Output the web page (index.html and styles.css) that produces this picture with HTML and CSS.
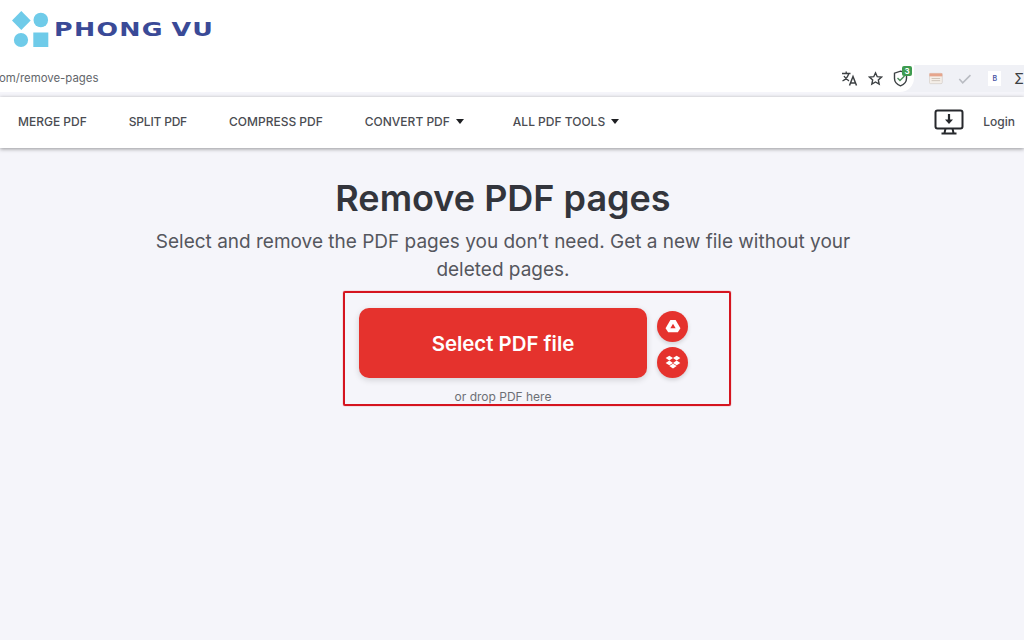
FILE: index.html
```html
<!DOCTYPE html>
<html lang="en">
<head>
<meta charset="utf-8">
<title>Remove PDF pages</title>
<link rel="stylesheet" href="styles.css">
</head>
<body>
<header class="brand">
  <svg class="brand-mark" width="38" height="38" viewBox="0 0 38 38" aria-hidden="true">
    <path d="M9.300 0L18.700 9.500L9.300 19L0 9.500Z" fill="#6fcbe9"/>
    <circle cx="28.800" cy="9" r="7.300" fill="#6fcbe9"/>
    <circle cx="9" cy="29" r="7.100" fill="#6fcbe9"/>
    <rect x="21.300" y="21.500" width="15" height="14.500" fill="#6fcbe9"/>
  </svg>
  <span class="brand-name">PHONG VU</span>
</header>
<div class="browser-bar">
  <div class="omnibox">
    <span class="url">om/remove-pages</span>
    <div class="omni-icons">
      <svg width="17" height="17" viewBox="0 0 17 17" fill="none" stroke="#3c4043" stroke-width="1.300" aria-hidden="true">
        <path d="M1 3.500H9.500M5.200 1.500V3.500M7.800 3.500C7 6.500 4.500 9.500 1.500 11M3 6C4 8 6 9.800 8 10.800"/>
        <path d="M8.500 15.500L12 6.500L15.500 15.500M9.700 13H14.300" stroke-width="1.500"/>
      </svg>
      <svg width="15" height="15" viewBox="0 0 24 24" fill="none" stroke="#3c4043" stroke-width="2.200" aria-hidden="true">
        <path d="M12 3L14.800 9.100L21.500 9.800L16.500 14.300L17.900 20.900L12 17.500L6.100 20.900L7.500 14.300L2.500 9.800L9.200 9.100Z"/>
      </svg>
      <span class="shield">
        <svg width="15" height="17" viewBox="0 0 15 17" fill="none" stroke="#3c4043" stroke-width="1.400" aria-hidden="true">
          <path d="M7.500 1.200L13.500 3.200V8.500C13.500 12 10.800 14.500 7.500 15.800C4.200 14.500 1.500 12 1.500 8.500V3.200Z"/>
          <path d="M4.500 8L7 10.500L11.500 6" stroke="#4b8b5a"/>
        </svg>
        <span class="badge">3</span>
      </span>
    </div>
  </div>
  <div class="extensions">
    <svg width="16" height="13" viewBox="0 0 16 13" aria-hidden="true">
      <rect x="0.500" y="0.500" width="15" height="12" rx="1.500" fill="#f5efe9" stroke="#d9d4cf"/>
      <rect x="0.500" y="0.500" width="15" height="3.500" fill="#e6a58d"/>
      <path d="M3 6.500H13M3 9H13" stroke="#c9bdb3"/>
    </svg>
    <svg width="16" height="12" viewBox="0 0 16 12" fill="none" stroke="#b9bcc2" stroke-width="1.800" aria-hidden="true">
      <path d="M1.500 6L5.500 10.500L14.500 1.500"/>
    </svg>
    <span class="ext-b">B</span>
    <span class="ext-sigma">Σ</span>
  </div>
</div>
<nav class="nav">
  <ul class="nav-links">
    <li class="nav-item merge">MERGE PDF</li>
    <li class="nav-item split">SPLIT PDF</li>
    <li class="nav-item compress">COMPRESS PDF</li>
    <li class="nav-item convert">CONVERT PDF<span class="caret"></span></li>
    <li class="nav-item all">ALL PDF TOOLS<span class="caret"></span></li>
  </ul>
  <div class="nav-right">
    <svg width="30" height="26" viewBox="0 0 30 26" fill="none" stroke="#26282c" stroke-width="2" aria-hidden="true">
      <rect x="1.500" y="1.500" width="27" height="18" rx="2"/>
      <path d="M15 5V13" stroke-width="2.200"/>
      <path d="M11 10.500H19L15 15Z" fill="#26282c" stroke="none"/>
      <path d="M11.500 19.500L10.500 24M18.500 19.500L19.500 24M7.500 24.500H22.500"/>
    </svg>
    <span class="login">Login</span>
  </div>
</nav>
<main class="page">
  <h1 class="title">Remove PDF pages</h1>
  <p class="lead">Select and remove the PDF pages you don’t need. Get a new file without your deleted pages.</p>
  <section class="highlight">
    <div class="upload-row">
      <button class="select-btn" type="button">Select PDF file</button>
      <div class="cloud">
        <span class="cloud-btn">
          <svg width="16" height="14" viewBox="0 0 18 16" aria-hidden="true">
            <path d="M6 1H12L17.500 10.500L14.500 15H3.500L0.500 10.500Z" fill="#fff"/>
            <path d="M9 5.500L6 10.500H12Z" fill="#e5322d"/>
          </svg>
        </span>
        <span class="cloud-btn">
          <svg width="16" height="14" viewBox="0 0 18 16" fill="#fff" aria-hidden="true">
            <path d="M4.800 0.800L9 3.500L4.800 6.200L0.600 3.500Z"/>
            <path d="M13.200 0.800L17.400 3.500L13.200 6.200L9 3.500Z"/>
            <path d="M4.800 6.400L9 9.100L4.800 11.800L0.600 9.100Z"/>
            <path d="M13.200 6.400L17.400 9.100L13.200 11.800L9 9.100Z"/>
            <path d="M4.800 12.600L9 9.900L13.200 12.600L9 15.300Z"/>
          </svg>
        </span>
      </div>
    </div>
    <p class="drop">or drop PDF here</p>
  </section>
</main>
</body>
</html>
```
FILE: styles.css
```css
* { box-sizing: border-box; }
html, body { margin: 0; padding: 0; }
body {
  width: 1024px;
  height: 640px;
  overflow: hidden;
  background: #f5f5fa;
  font-family: Inter, "Liberation Sans", sans-serif;
  display: flex;
  flex-direction: column;
}
.brand {
  height: 65px;
  background: #fff;
  display: flex;
  align-items: center;
  padding: 0 0 5px 12px;
  flex: none;
}
.brand-mark { flex: none; }
.brand-name {
  margin: 0 0 0 4px;
  font-family: "DejaVu Sans", sans-serif;
  font-weight: 700;
  font-size: 19.500px;
  letter-spacing: 1px;
  word-spacing: -2px;
  color: #3a4a97;
  line-height: 1;
  transform: scaleX(1.3);
  transform-origin: left center;
}
.browser-bar {
  height: 27px;
  flex: none;
  display: flex;
  background: #f0f1f6;
}
.omnibox {
  flex: none;
  width: 914px;
  background: #fff;
  border-bottom-right-radius: 14px;
  display: flex;
  align-items: center;
  justify-content: space-between;
  padding-right: 6px;
}
.url {
  font-size: 11.400px;
  color: #63666b;
  margin: 0 0 2px -1px;
}
.omni-icons {
  display: flex;
  align-items: center;
  gap: 10px;
}
.shield { position: relative; display: flex; }
.badge {
  position: absolute;
  top: -4px;
  left: 9px;
  width: 10px;
  height: 10px;
  background: #3e9b4f;
  color: #fff;
  font-size: 8px;
  font-weight: 700;
  line-height: 10px;
  text-align: center;
  border-radius: 2px;
}
.extensions {
  flex: 1;
  display: flex;
  align-items: center;
  padding-left: 15px;
  overflow: hidden;
  gap: 15px;
}
.ext-b {
  width: 15px;
  height: 15px;
  margin-left: 2px;
  background: #fff;
  color: #4a55a5;
  font-size: 7px;
  font-weight: 600;
  line-height: 15px;
  text-align: center;
}
.ext-sigma {
  margin-left: -2px;
  font-size: 14px;
  color: #3c4043;
}
.nav {
  margin-top: 5px;
  height: 51px;
  flex: none;
  background: #fff;
  box-shadow: 0 1px 4px rgba(0, 0, 0, 0.4);
  display: flex;
  align-items: center;
  justify-content: space-between;
  padding: 0 9px 2px 18px;
}
.nav-links {
  list-style: none;
  margin: 0;
  padding: 0;
  display: flex;
  align-items: center;
}
.nav-item {
  font-size: 12px;
  font-weight: 500;
  color: #4a4c52;
  white-space: nowrap;
  display: flex;
  align-items: center;
}
.split { margin-left: 42px; letter-spacing: -0.200px; }
.compress { margin-left: 42px; }
.convert { margin-left: 42px; }
.all { margin-left: 49px; }
.caret {
  margin-left: 6px;
  width: 0;
  height: 0;
  border-left: 4px solid transparent;
  border-right: 4px solid transparent;
  border-top: 5px solid #1e1f22;
}
.nav-right {
  display: flex;
  align-items: center;
  gap: 19px;
}
.login {
  font-size: 12px;
  font-weight: 500;
  color: #4a4c52;
}
.page {
  flex: 1;
  display: flex;
  flex-direction: column;
  align-items: center;
  padding: 28px 18px 0 0;
}
.title {
  margin: 0;
  font-size: 36px;
  line-height: 44px;
  font-weight: 600;
  color: #33353c;
}
.lead {
  margin: 8px 0 0;
  width: 720px;
  text-align: center;
  font-size: 19px;
  line-height: 28px;
  font-weight: 400;
  color: #55575e;
}
.highlight {
  margin: 7px 0 0 68px;
  width: 388px;
  height: 115px;
  border: 2px solid #d5141f;
  border-radius: 2px;
  box-shadow: 0 0 1px #d5141f;
  padding: 15px 0 0 14px;
  display: flex;
  flex-direction: column;
}
.upload-row {
  display: flex;
  align-items: center;
}
.select-btn {
  width: 288px;
  height: 70px;
  padding: 1px 0 0;
  border: 0;
  border-radius: 10px;
  background: #e5322d;
  color: #fff;
  font-family: inherit;
  font-size: 20.400px;
  font-weight: 600;
  box-shadow: 0 2px 6px rgba(0, 0, 0, 0.15);
}
.cloud {
  margin: 2px 0 0 10px;
  display: flex;
  flex-direction: column;
  gap: 5px;
}
.cloud-btn {
  width: 31px;
  height: 31px;
  border-radius: 50%;
  background: #e5322d;
  display: flex;
  align-items: center;
  justify-content: center;
  box-shadow: 0 2px 4px rgba(0, 0, 0, 0.15);
}
.drop {
  margin: 11px 0 0;
  width: 288px;
  text-align: center;
  font-size: 12px;
  line-height: 16px;
  color: #6d6f75;
}
```
